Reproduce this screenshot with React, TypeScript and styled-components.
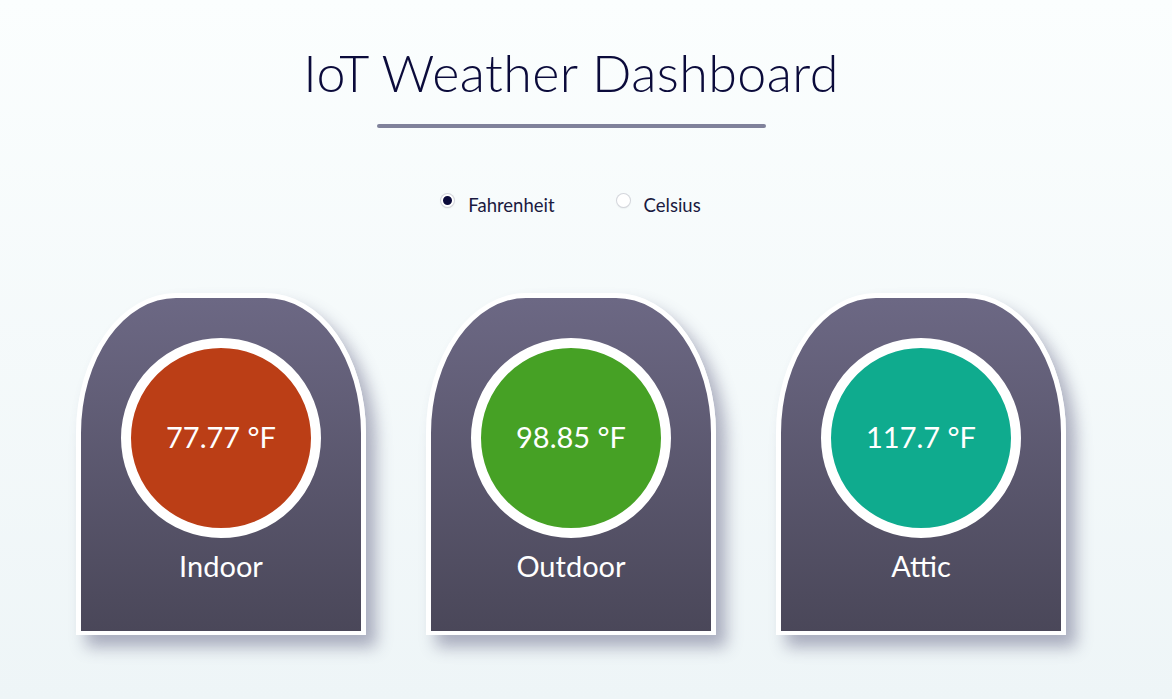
import styled, { createGlobalStyle } from 'styled-components'
import { useState } from 'react'

const GlobalStyle = createGlobalStyle`
    html, body {
        margin: 0;
        padding: 0;
    }

    body {
        min-height: 100vh;
        background: linear-gradient(180deg, #fbfefe 0%, #eef5f7 100%);
        font-family: Lato, "Noto Sans", sans-serif;
        color: #0b0b3b;
    }
`

const Page = styled.div`
    min-height: 100vh;
    padding: 41px 30px 0 0;
    box-sizing: border-box;

    display: flex;
    flex-direction: column;
    align-items: center;
`

const Title = styled.h1`
    margin: 0;
    font-size: 52px;
    font-weight: 300;
    line-height: 62px;
    letter-spacing: 0.4px;
    color: #0b0b3b;
`

const Underline = styled.div`
    width: 389px;
    height: 4px;
    margin-top: 21px;
    border-radius: 2px;
    background: #80829b;
`

const UnitPicker = styled.div`
    margin-top: 66px;
    display: flex;
    align-items: center;
    gap: 62px;
`

const UnitOption = styled.label`
    display: flex;
    align-items: center;
    gap: 14px;
    font-size: 18.5px;
    color: #1a1a40;
    cursor: pointer;
`

const RadioDot = styled.span<{ $checked: boolean }>`
    width: 13px;
    height: 13px;
    border-radius: 50%;
    box-sizing: border-box;
    background: ${p => (p.$checked ? '#0b0b3b' : '#ffffff')};
    border: 2px solid #ffffff;
    box-shadow: 0 0 0 1px #d4d6dc, 0 1px 2px rgba(0, 0, 0, 0.15);
    margin-top: -10px;
`

const CardRow = styled.div`
    margin-top: 77px;
    display: flex;
    gap: 60px;
`

const Card = styled.div`
    width: 290px;
    height: 342px;
    box-sizing: border-box;
    border: 5px solid #ffffff;
    border-bottom-width: 4px;
    border-radius: 100px 100px 0 0 / 140px 140px 0 0;
    background: linear-gradient(180deg, #6c6884 0%, #4a4759 100%);
    box-shadow: 10px 12px 16px rgba(84, 84, 120, 0.45);

    display: flex;
    flex-direction: column;
    align-items: center;
    padding-top: 40px;
`

const Reading = styled.div<{ $color: string }>`
    width: 200px;
    height: 200px;
    box-sizing: border-box;
    border-radius: 50%;
    border: 10px solid #ffffff;
    background: ${p => p.$color};

    display: flex;
    align-items: center;
    justify-content: center;

    font-size: 29px;
    color: #ffffff;
    padding-bottom: 4px;
`

const Location = styled.div`
    margin-top: 10px;
    font-size: 29px;
    color: #ffffff;
`

const sensors = [
    { name: 'Indoor', temp: 77.77, color: '#bb3e16' },
    { name: 'Outdoor', temp: 98.85, color: '#46a125' },
    { name: 'Attic', temp: 117.7, color: '#0fab8e' },
]

const App = () => {
    const [unit, setUnit] = useState<'F' | 'C'>('F')

    function showTemp(f: number) {
        if (unit === 'F') return `${f} °F`
        return `${(Math.round(((f - 32) * 5) / 9 * 100) / 100)} °C`
    }

    return (
        <>
            <GlobalStyle />
            <Page>
                <Title>IoT Weather Dashboard</Title>
                <Underline />

                <UnitPicker>
                    <UnitOption onClick={() => setUnit('F')}>
                        <RadioDot $checked={unit === 'F'} />
                        Fahrenheit
                    </UnitOption>
                    <UnitOption onClick={() => setUnit('C')}>
                        <RadioDot $checked={unit === 'C'} />
                        Celsius
                    </UnitOption>
                </UnitPicker>

                <CardRow>
                    {sensors.map(s => (
                        <Card key={s.name}>
                            <Reading $color={s.color}>{showTemp(s.temp)}</Reading>
                            <Location>{s.name}</Location>
                        </Card>
                    ))}
                </CardRow>
            </Page>
        </>
    )
}

export default App
